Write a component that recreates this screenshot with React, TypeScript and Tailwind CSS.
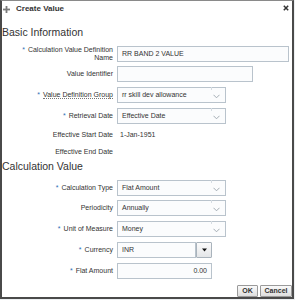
import React from "react";

const Star = () => <span className="text-[#2f6fb5] mr-[3px]">*</span>;

const Chevron = () => (
  <svg width="7" height="5" viewBox="0 0 7 5" className="absolute right-[5px] top-[6px]">
    <polyline points="0.5,0.8 3.5,3.8 6.5,0.8" fill="none" stroke="#9aa4ad" strokeWidth="0.9" />
  </svg>
);

function Label({ children, req, help }: { children: React.ReactNode; req?: boolean; help?: boolean }) {
  return (
    <div className="w-[111px] shrink-0 text-right text-[7px] leading-[8px] text-[#333]">
      {req && <Star />}
      <span className={help ? "border-b border-dotted border-[#777]" : ""}>{children}</span>
    </div>
  );
}

function Select({ value, w = "w-[109px]" }: { value: string; w?: string }) {
  return (
    <div className={`relative ${w} h-[16px] border border-[#b9c3cc] bg-[#fbfcfd] text-[7px] text-[#333] pl-[4px] flex items-center`}>
      {value}
      <div className="absolute right-[13px] top-[-1px] h-[3px] w-px bg-[#d5dce2]" />
      <Chevron />
    </div>
  );
}

function Row({ children, mt }: { children: React.ReactNode; mt: string }) {
  return <div className={`flex items-center shrink-0 ${mt}`}>{children}</div>;
}

export default function App() {
  return (
    <div className="w-[295px] h-[300px] bg-[#eceff1] font-['Liberation_Sans',Arial,sans-serif]">
      <div className="w-[294px] h-[299px] bg-white border-t border-t-[#8a8a8a] border-l-2 border-r-2 border-b-2 border-[#4a4a4a] flex flex-col overflow-hidden">
        {/* header */}
        <div className="flex items-center h-[17px] shrink-0 pl-[1px] pr-[2px]">
          <svg width="7" height="7" viewBox="0 0 7 7" className="mr-[6px] mt-[-1px]">
            <rect x="2.6" y="0" width="1.8" height="7" fill="#7b7b7b" />
            <rect x="0" y="2.6" width="7" height="1.8" fill="#7b7b7b" />
          </svg>
          <span className="text-[8px] font-bold text-[#333] mt-[-1px]">Create Value</span>
          <div className="flex-1" />
          <svg width="6" height="6" viewBox="0 0 6 6" className="mr-[1px] mt-[-3px]">
            <path d="M0.8,0.8 L5.2,5.2 M5.2,0.8 L0.8,5.2" stroke="#333" strokeWidth="1.5" />
          </svg>
        </div>

        <div className="text-[10.5px] leading-[12px] text-[#333] mt-[8px] shrink-0">Basic Information</div>

        {/* Row 1 */}
        <Row mt="mt-[8px]">
          <Label req>
            Calculation Value Definition
            <br />
            Name
          </Label>
          <div className="ml-[4px] w-[172px] h-[16px] border border-[#b9c3cc] bg-[#fbfcfd] text-[7px] text-[#333] pl-[4px] flex items-center">
            RR BAND 2 VALUE
          </div>
        </Row>
        <Row mt="mt-[4px]">
          <Label>Value Identifier</Label>
          <div className="ml-[4px] w-[136px] h-[16px] border border-[#b9c3cc] bg-[#fbfcfd]" />
        </Row>
        <Row mt="mt-[5px]">
          <Label req help>Value Definition Group</Label>
          <div className="ml-[4px]">
            <Select value="rr skill dev allowance" />
          </div>
        </Row>
        <Row mt="mt-[5px]">
          <Label req>Retrieval Date</Label>
          <div className="ml-[4px]">
            <Select value="Effective Date" />
          </div>
        </Row>
        <Row mt="mt-[7px]">
          <Label>Effective Start Date</Label>
          <div className="ml-[7px] text-[7px] text-[#333] leading-[8px]">1-Jan-1951</div>
        </Row>
        <Row mt="mt-[9px]">
          <Label>Effective End Date</Label>
        </Row>

        <div className="text-[10.5px] leading-[12px] text-[#333] mt-[4px] shrink-0">Calculation Value</div>

        <Row mt="mt-[8px]">
          <Label req>Calculation Type</Label>
          <div className="ml-[4px]">
            <Select value="Flat Amount" />
          </div>
        </Row>
        <Row mt="mt-[4px]">
          <Label>Periodicity</Label>
          <div className="ml-[4px]">
            <Select value="Annually" />
          </div>
        </Row>
        <Row mt="mt-[5px]">
          <Label req>Unit of Measure</Label>
          <div className="ml-[4px]">
            <Select value="Money" />
          </div>
        </Row>
        <Row mt="mt-[5px]">
          <Label req>Currency</Label>
          <div className="ml-[4px] flex">
            <div className="w-[79px] h-[16px] border border-[#b9c3cc] bg-[#fbfcfd] text-[7px] text-[#333] pl-[4px] flex items-center">
              INR
            </div>
            <div className="w-[16px] h-[16px] border border-[#a9b3bc] bg-gradient-to-b from-[#fbfbfb] to-[#e4e6e8] flex items-center justify-center rounded-[1px]">
              <svg width="5" height="4" viewBox="0 0 5 4">
                <polygon points="0,0.5 5,0.5 2.5,3.5" fill="#111" />
              </svg>
            </div>
          </div>
        </Row>
        <Row mt="mt-[5px]">
          <Label req>Flat Amount</Label>
          <div className="ml-[4px] w-[95px] h-[16px] border border-[#b9c3cc] bg-[#fbfcfd] text-[7px] text-[#333] pr-[4px] flex items-center justify-end">
            0.00
          </div>
        </Row>

        <div className="flex justify-end gap-[2px] mt-[6px] shrink-0">
          <div className="w-[21px] h-[12px] border border-[#9a9a9a] rounded-[1px] bg-gradient-to-b from-[#fafafa] to-[#dedede] text-[7px] font-bold text-[#333] flex items-center justify-center">
            OK
          </div>
          <div className="w-[32px] h-[12px] border border-[#9a9a9a] rounded-[1px] bg-gradient-to-b from-[#fafafa] to-[#dedede] text-[7px] font-bold text-[#333] flex items-center justify-center">
            Cancel
          </div>
        </div>
      </div>
    </div>
  );
}
